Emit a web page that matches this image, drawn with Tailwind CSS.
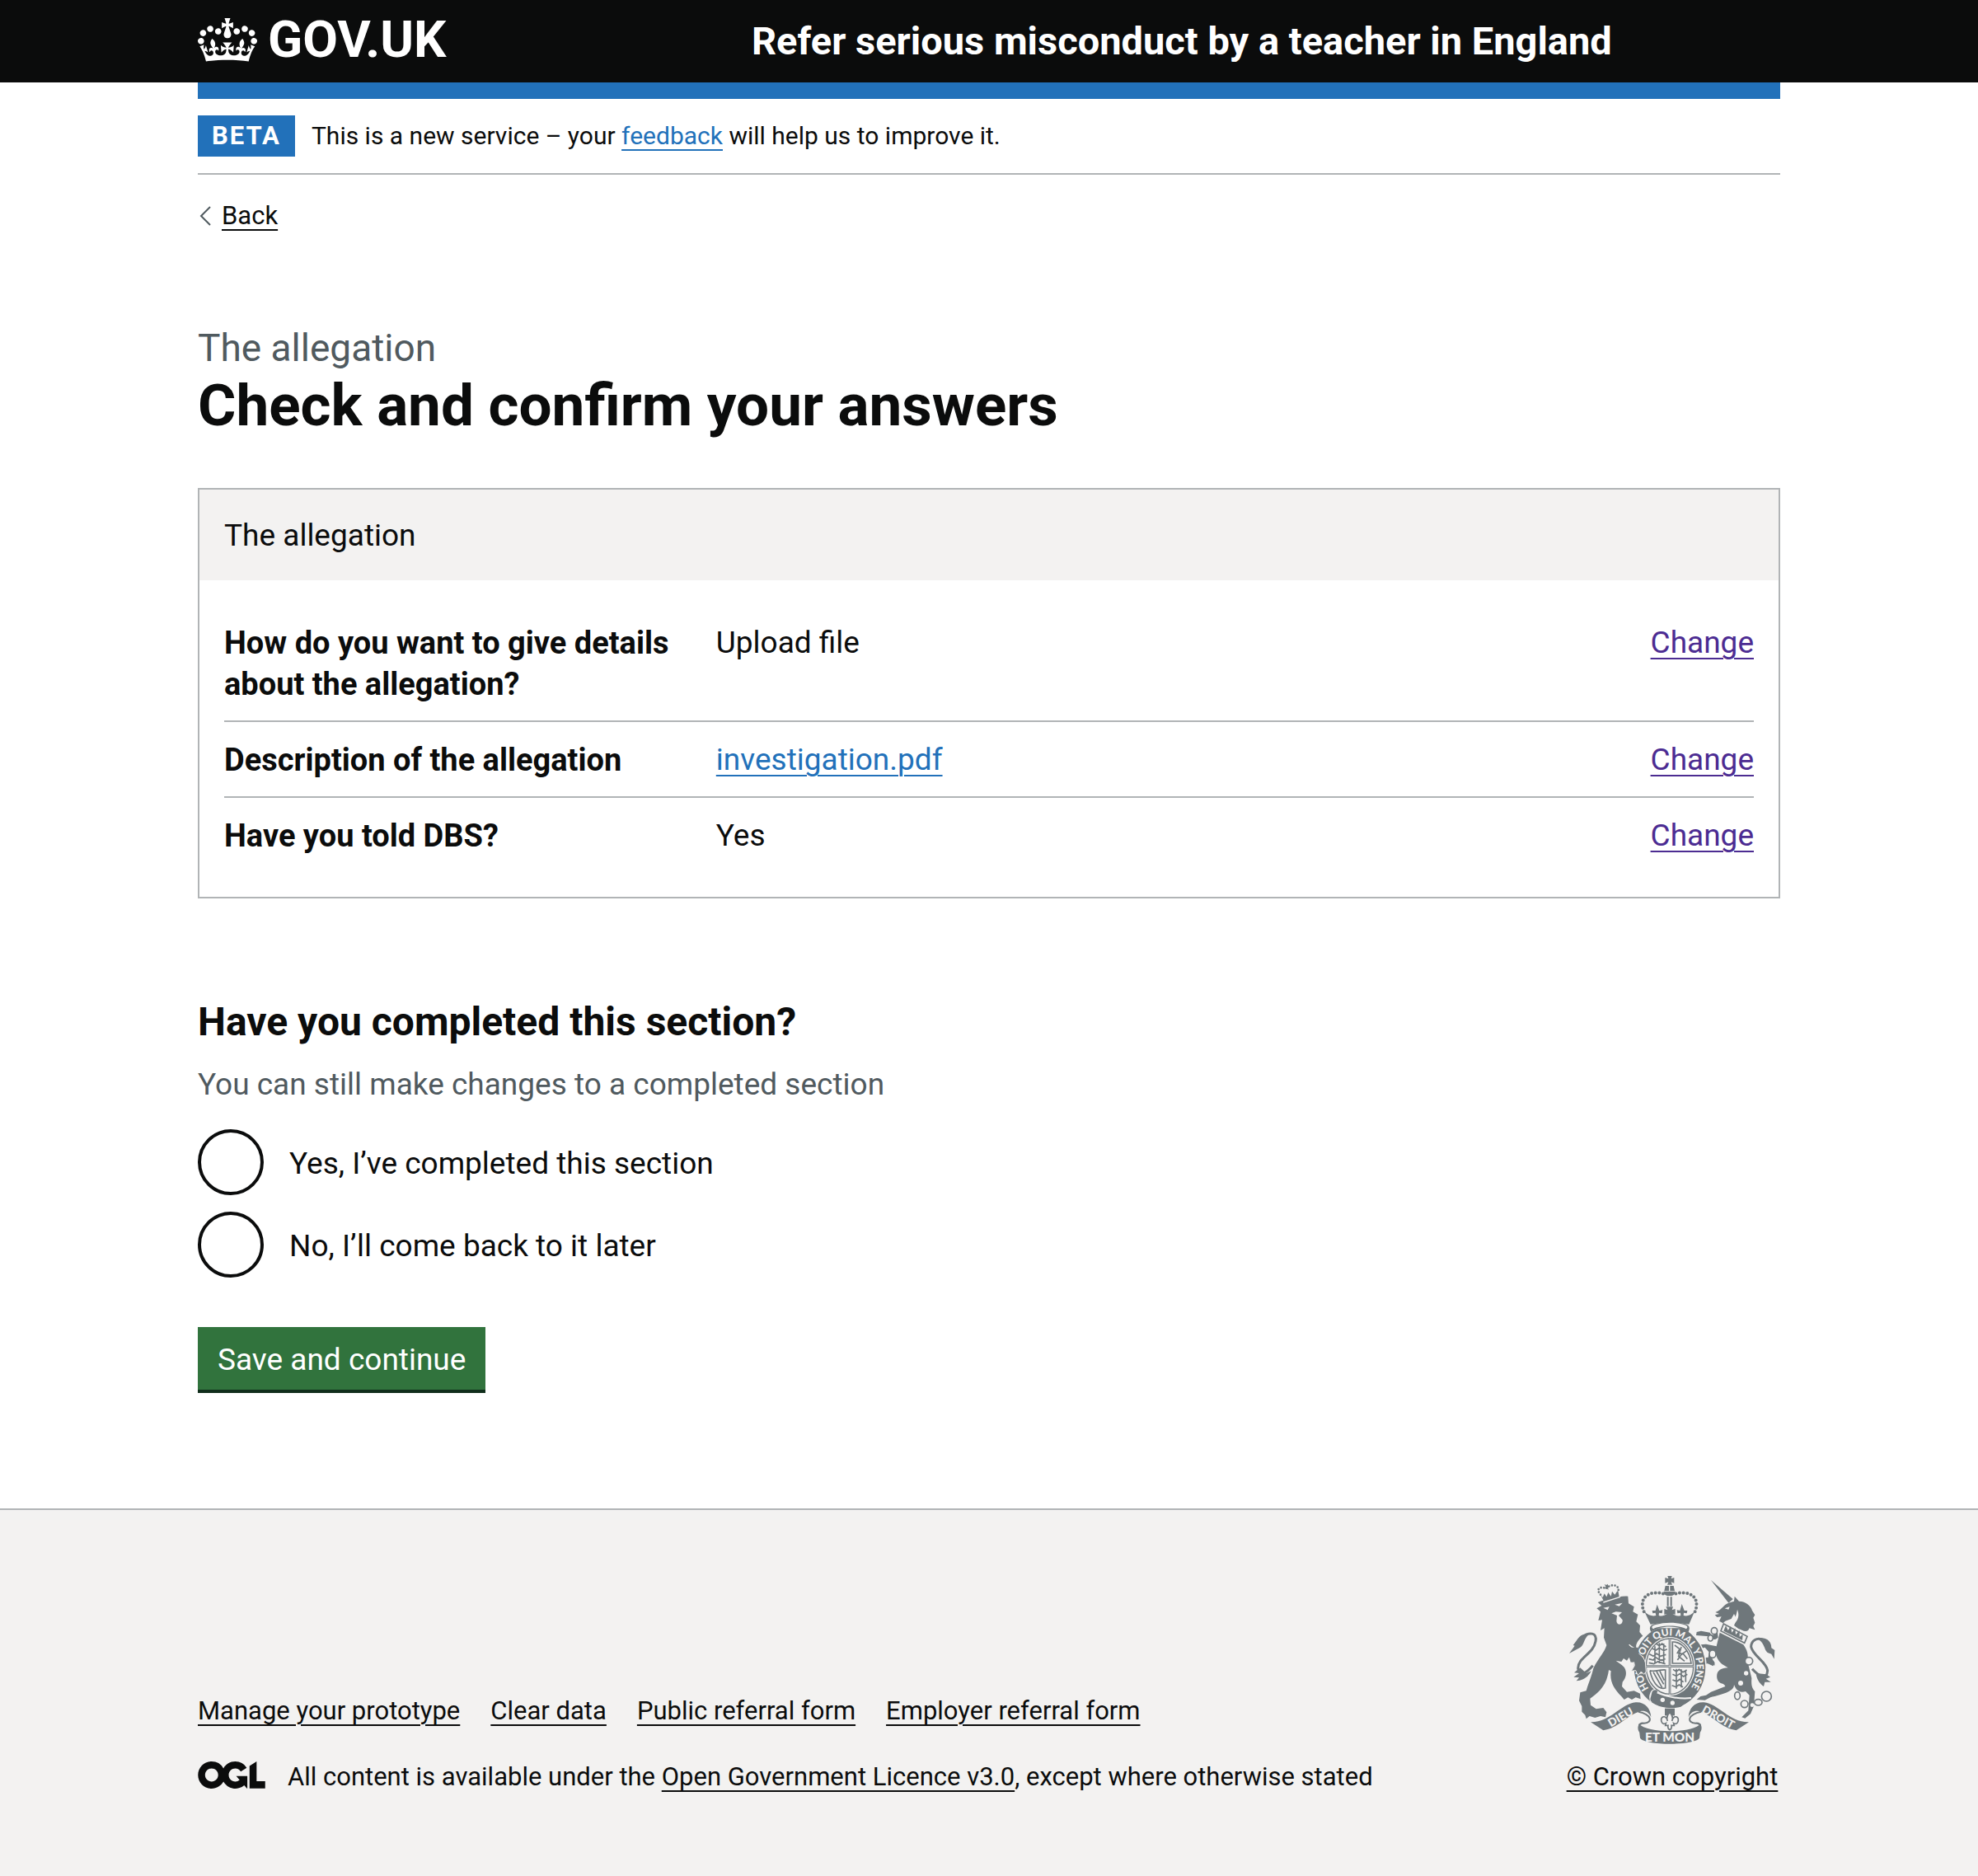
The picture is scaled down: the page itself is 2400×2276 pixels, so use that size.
<!DOCTYPE html>
<html lang="en">
<head>
<meta charset="utf-8">
<meta name="viewport" content="width=device-width, initial-scale=1">
<title>Check and confirm your answers</title>
<script src="https://cdn.jsdelivr.net/npm/@tailwindcss/browser@4"></script>
</head>
<body class="flex min-h-screen flex-col bg-[#f3f2f1] font-[Roboto,sans-serif] text-[37px] leading-[50px] text-[#0b0c0c]">

<header class="bg-[#0b0c0c] px-[60px] text-white">
  <div class="mx-auto flex h-[100px] max-w-[1920px] items-center">
    <div class="w-[35%] shrink-0">
      <a href="#" class="flex w-fit items-center gap-[13px] pb-1">
        <svg class="h-[53px] w-[72px]" viewBox="0 0 132 97" fill="currentColor" aria-hidden="true">
          <path d="M25 30.2c3.5 1.5 7.7-.2 9.1-3.7 1.5-3.6-.2-7.8-3.9-9.2-3.6-1.4-7.6.3-9.1 3.9-1.4 3.5.3 7.5 3.9 9zM9 39.5c3.6 1.5 7.8-.2 9.2-3.7 1.5-3.6-.2-7.8-3.9-9.1-3.6-1.5-7.6.2-9.1 3.8-1.4 3.5.3 7.5 3.8 9zM4.4 57.2c3.5 1.5 7.7-.2 9.1-3.8 1.5-3.6-.2-7.7-3.9-9.1-3.5-1.5-7.6.3-9.1 3.8-1.4 3.5.3 7.6 3.9 9.1zm38.3-21.4c3.5 1.5 7.7-.2 9.1-3.8 1.5-3.6-.2-7.7-3.9-9.1-3.6-1.5-7.6.3-9.1 3.8-1.3 3.6.4 7.7 3.9 9.1zm64.4-5.6c-3.6 1.5-7.8-.2-9.1-3.7-1.5-3.6.2-7.8 3.8-9.2 3.6-1.4 7.7.3 9.2 3.9 1.3 3.5-.4 7.5-3.9 9zm15.9 9.3c-3.6 1.5-7.7-.2-9.1-3.7-1.5-3.6.2-7.8 3.7-9.1 3.6-1.5 7.7.2 9.2 3.8 1.5 3.5-.3 7.5-3.8 9zm4.7 17.7c-3.6 1.5-7.8-.2-9.2-3.8-1.5-3.6.2-7.7 3.9-9.1 3.6-1.5 7.7.3 9.2 3.8 1.3 3.5-.4 7.6-3.9 9.1zM89.3 35.8c-3.6 1.5-7.8-.2-9.2-3.8-1.4-3.6.2-7.7 3.9-9.1 3.6-1.5 7.7.3 9.2 3.8 1.4 3.6-.3 7.7-3.9 9.1zM69.7 17.7l8.9 4.7V9.3l-8.9 2.8c-.2-.3-.5-.6-.9-.9L72.4 0H59.6l3.5 11.2c-.3.3-.6.5-.9.9l-8.8-2.8v13.1l8.8-4.7c.3.3.6.7.9.9l-5 15.4v.1c-.2.8-.4 1.6-.4 2.4 0 4.1 3.1 7.5 7 8.1h.2c.3 0 .7.1 1 .1.4 0 .7 0 1-.1h.2c4-.6 7.1-4.1 7.1-8.1 0-.8-.1-1.7-.4-2.4V34l-5.1-15.4c.4-.2.7-.6 1-.9zM66 92.8c16.9 0 32.8 1.1 47.1 3.2 4-16.9 8.9-26.7 14-33.5l-9.6-3.4c1 4.9 1.1 7.2 0 10.2-1.5-1.4-3-4.3-4.2-8.7L108.6 76c2.8-2 5-3.2 7.5-3.3-4.4 9.4-10 11.9-13.6 11.2-4.3-.8-6.3-4.6-5.6-7.9 1-4.7 5.7-5.9 8-.5 4.3-8.7-3-11.4-7.6-8.8 7.1-7.2 7.9-13.5 2.1-21.1-8 6.1-8.1 12.3-4.5 20.8-4.7-5.4-12.1-2.5-9.5 6.2 3.4-5.2 7.9-2 7.2 3.1-.6 4.3-6.4 7.8-13.5 7.2-10.3-.9-10.9-8-11.2-13.8 2.5-.5 7.1 1.8 11 7.3L80.2 60c-4.1 4.4-8 5.3-12.3 5.4 1.4-4.4 8-11.6 8-11.6H55.5s6.4 7.2 7.9 11.6c-4.2-.1-8-1-12.3-5.4l1.4 16.4c3.9-5.5 8.5-7.7 10.9-7.3-.3 5.8-.9 12.8-11.1 13.8-7.2.6-12.9-2.9-13.5-7.2-.7-5 3.8-8.3 7.1-3.1 2.7-8.7-4.6-11.6-9.4-6.2 3.7-8.5 3.6-14.7-4.6-20.8-5.8 7.6-5 13.9 2.2 21.1-4.7-2.6-11.9.1-7.7 8.8 2.3-5.5 7.1-4.2 8.1.5.7 3.3-1.3 7.1-5.7 7.9-3.5.7-9-1.8-13.5-11.2 2.5.1 4.7 1.3 7.5 3.3l-4.7-15.4c-1.2 4.4-2.7 7.2-4.3 8.7-1.1-3-.9-5.3 0-10.2l-9.5 3.4c5 6.9 9.9 16.7 14 33.5 14.8-2.1 30.8-3.2 47.7-3.2z"/>
        </svg>
        <span class="text-[62px] leading-[60px] font-bold">GOV.UK</span>
      </a>
    </div>
    <a href="#" class="text-[47px] leading-[60px] font-bold whitespace-nowrap">Refer serious misconduct by a teacher in England</a>
  </div>
</header>

<div class="grow bg-white px-[60px]">
  <div class="mx-auto max-w-[1920px] border-t-[20px] border-[#2271ba]">
    <div class="flex items-center gap-5 border-b-2 border-[#b1b4b6] py-5 text-[31px] leading-[50px]">
      <strong class="bg-[#2271ba] px-[17px] font-bold tracking-[2px] text-white">BETA</strong>
      <p class="text-[30px]">This is a new service – your <a href="#" class="text-[#2271ba] underline decoration-2 underline-offset-[6px]">feedback</a> will help us to improve it.</p>
    </div>

    <a href="#" class="mt-[30px] flex w-fit items-center gap-3 text-[31px] leading-[40px]">
      <svg class="h-[24px] w-[17px]" viewBox="0 0 17 24" fill="none" stroke="#505a5f" stroke-width="2" aria-hidden="true"><path d="M15 1L4 12l11 11"/></svg>
      <span class="underline decoration-2 underline-offset-[6px]">Back</span>
    </a>

    <main class="pt-[108px] pb-[140px]">
      <p class="text-[46px] leading-[64px] text-[#505a5f]">The allegation</p>
      <h1 class="text-[71px] leading-[76px] font-bold">Check and confirm your answers</h1>

      <section class="mt-[62px] border-2 border-[#b1b4b6]">
        <h2 class="bg-[#f3f2f1] px-[30px] pt-[31px] pb-[29px]">The allegation</h2>
        <dl class="divide-y-2 divide-[#b1b4b6] p-[30px]">
          <div class="grid grid-cols-[30%_1fr_auto] gap-x-10 pt-[21px] pb-[19px]">
            <dt class="text-[38px] font-bold">How do you want to give details about the allegation?</dt>
            <dd>Upload file</dd>
            <dd><a href="#" class="text-[#4c2c92] underline decoration-2 underline-offset-[6px]">Change</a></dd>
          </div>
          <div class="grid grid-cols-[30%_1fr_auto] gap-x-10 pt-[21px] pb-[19px]">
            <dt class="text-[38px] font-bold">Description of the allegation</dt>
            <dd><a href="#" class="text-[#2271ba] underline decoration-2 underline-offset-[6px]">investigation.pdf</a></dd>
            <dd><a href="#" class="text-[#4c2c92] underline decoration-2 underline-offset-[6px]">Change</a></dd>
          </div>
          <div class="grid grid-cols-[30%_1fr_auto] gap-x-10 pt-[21px] pb-[19px]">
            <dt class="text-[38px] font-bold">Have you told DBS?</dt>
            <dd>Yes</dd>
            <dd><a href="#" class="text-[#4c2c92] underline decoration-2 underline-offset-[6px]">Change</a></dd>
          </div>
        </dl>
      </section>

      <form class="mt-[120px]">
        <fieldset>
          <legend class="text-[48px] leading-[60px] font-bold">Have you completed this section?</legend>
          <p class="mt-[21px] text-[#505a5f]">You can still make changes to a completed section</p>
          <div class="mt-[29px] flex flex-col gap-5">
            <div class="flex items-center gap-[31px]">
              <input type="radio" id="completed-yes" name="completed" class="size-20 shrink-0 appearance-none rounded-full border-4 border-[#0b0c0c] bg-white">
              <label for="completed-yes" class="pt-[3px]">Yes, I’ve completed this section</label>
            </div>
            <div class="flex items-center gap-[31px]">
              <input type="radio" id="completed-no" name="completed" class="size-20 shrink-0 appearance-none rounded-full border-4 border-[#0b0c0c] bg-white">
              <label for="completed-no" class="pt-[3px]">No, I’ll come back to it later</label>
            </div>
          </div>
        </fieldset>
        <button type="submit" class="mt-[60px] block h-20 border-b-4 border-[#102e1b] bg-[#31733d] px-6 pt-[3px] text-white">Save and continue</button>
      </form>
    </main>
  </div>
</div>

<footer class="border-t-2 border-[#b1b4b6] bg-[#f3f2f1] px-[60px] pt-[80px] pb-[100px] text-[31px] leading-[40px]">
  <div class="mx-auto flex max-w-[1920px] items-end justify-between">
    <div>
      <ul class="flex gap-[37px]">
        <li><a href="#" class="underline decoration-2 underline-offset-[6px]">Manage your prototype</a></li>
        <li><a href="#" class="underline decoration-2 underline-offset-[6px]">Clear data</a></li>
        <li><a href="#" class="underline decoration-2 underline-offset-[6px]">Public referral form</a></li>
        <li><a href="#" class="underline decoration-2 underline-offset-[6px]">Employer referral form</a></li>
      </ul>
      <div class="mt-10 flex items-center gap-[27px]">
        <svg class="mb-[6px] h-[33px] w-[82px]" viewBox="0 0 483.2 195.7" fill="currentColor" aria-hidden="true"><path d="M421.5 142.8V.1l-50.7 32.3v161.1h112.4v-50.7zm-122.3-9.6A47.12 47.12 0 0 1 221 97.8c0-26 21.1-47.1 47.1-47.1 16.7 0 31.4 8.7 39.7 21.8l42.7-27.2A97.63 97.63 0 0 0 268.1 0c-36.5 0-68.3 20.1-85.1 49.7A98 98 0 0 0 97.8 0C43.9 0 0 43.9 0 97.9s43.9 97.8 97.8 97.8c36.5 0 68.3-20.1 85.1-49.7a97.76 97.76 0 0 0 149.6 25.4l19.4 22.2h3v-87.8h-80l24.3 27.5zM97.9 145c-26 0-47.1-21.1-47.1-47.1s21.1-47.1 47.1-47.1 47.1 21.1 47.1 47.1S123.9 145 97.8 145"/></svg>
        <p>All content is available under the <a href="#" class="underline decoration-2 underline-offset-[6px]">Open Government Licence v3.0</a>, except where otherwise stated</p>
      </div>
    </div>
    <a href="#" class="flex w-[262px] flex-col items-center gap-5">
      <svg class="h-[204px] w-[250px]" viewBox="72 66 750 612" fill="#6f777b" aria-hidden="true">
        <!-- lion -->
        <path d="M176 162L190 174 172 184 186 196 178 228 192 226 186 264 200 256 198 290 208 318 C200 345 178 365 160 402 C154 430 142 455 134 484 L112 490 108 520 118 540 118 560 130 572 134 586 146 576 166 582 186 576 204 580 208 562 196 546 170 550 150 536 148 512 C175 492 208 470 216 408 L224 412 C218 450 236 478 262 504 L272 516 286 508 300 516 314 508 332 514 330 494 308 484 282 488 264 468 266 452 C284 430 280 410 272 398 C262 386 250 382 242 374 L262 378 270 366 282 374 290 362 300 376 312 390 300 410 316 406 320 424 334 412 346 420 348 384 C344 356 326 338 310 334 L288 316 316 330 C312 312 326 296 340 284 L328 270 330 246 316 232 322 206 304 196 308 178 288 166 286 140 C250 138 210 150 176 162Z"/>
        <path d="M186 134l8 10 6-14 8 12 6-16 10 14 4-18 10 12 8-12 4-2 4 22-54 20z"/>
        <path d="M186 134C166 112 188 102 206 112M208 110C222 94 258 96 250 124" fill="none" stroke="#6f777b" stroke-width="8" stroke-dasharray="0 11" stroke-linecap="round"/>
        <path d="M200 96l7 3 5-4 2 8 7 1-7 4 0 9-5-7-8 2 4-8z"/>
        <path d="M196 182l22-4-6 12zM238 170l28-6-12 12z" fill="#f3f2f1"/>
        <path d="M226 202l16-6 22 2-12 12 14 16c2 20-20 22-22 4l2-20z" fill="#f3f2f1"/>
        <path d="M196 162L258 142M290 316l28 24" fill="none" stroke="#f3f2f1" stroke-width="4"/>
        <path d="M118 288C146 268 174 272 168 304C160 350 104 362 104 402C108 434 134 420 158 392" fill="none" stroke="#6f777b" stroke-width="9"/>
        <path d="M142 280C108 274 108 292 86 318L92 320 72 348 112 326C126 318 124 298 142 280zM112 400L90 418 108 420 88 434 108 436 98 448C120 446 140 436 152 412L134 420z"/>

        <!-- unicorn -->
        <path d="M588 81L668 150 652 164Z"/>
        <path d="M604 198C624 192 634 170 652 164L672 158 674 140 690 158C716 158 734 176 738 192L748 208 742 218 748 236 742 248 748 262 728 256C720 278 700 262 688 258L672 246 682 224 672 204 662 222 640 230 632 238 618 230 626 214 610 216 602 208 618 204Z"/>
        <path d="M638 184l18-6-4 10zM684 188c12 28-4 50-20 54 8-16 16-30 20-54z" fill="#f3f2f1"/>
        <path d="M634 240L720 286 710 310 624 266Z" fill="none" stroke="#6f777b" stroke-width="5"/>
        <path d="M634 266l8-20 8 18 10-16 4 24 12-16 2 24 14-16 0 24 12-10-2 22z"/>
        <path d="M620 272L706 316C726 344 722 360 722 380L736 438C734 466 738 474 748 486L744 540 732 568 712 584 700 580 724 556 728 500 714 486 C690 494 680 480 672 462 C672 488 628 496 586 508 L566 518 536 516 550 504 570 500 588 488 640 468 C636 452 616 464 610 438 C606 410 624 402 650 400 C628 388 614 380 606 352 L598 340 C590 352 588 366 600 378 L602 392 586 380 570 386 564 370 578 362 582 344 566 326 554 330 550 350 538 344 536 324 552 316 570 314 608 322 Z"/>
        <path d="M614 290C596 306 590 290 580 286L562 284 534 282 536 270 552 266 584 272C594 290 604 276 612 270zM560 366L574 362 602 382 596 394 566 380z"/>
        <g fill="#f3f2f1" stroke="#6f777b" stroke-width="5"><ellipse cx="600" cy="266" rx="11" ry="12"/><ellipse cx="586" cy="292" rx="9" ry="11"/><ellipse cx="594" cy="350" rx="12" ry="14"/><circle cx="726" cy="376" r="14"/><ellipse cx="684" cy="502" rx="10" ry="14"/><circle cx="710" cy="532" r="13"/><ellipse cx="760" cy="526" rx="14" ry="11"/><circle cx="790" cy="504" r="18"/></g>
        <g fill="#f3f2f1"><circle cx="716" cy="420" r="8"/><circle cx="696" cy="456" r="9"/><circle cx="738" cy="536" r="7"/></g>
        <path d="M782 300C752 286 734 304 734 324C740 356 790 378 794 410C792 446 764 432 738 404" fill="none" stroke="#6f777b" stroke-width="9"/>
        <path d="M756 294C790 286 808 304 808 328L820 336 818 368 808 350 796 346C780 336 786 310 756 294zM752 420L790 424 804 434 788 440 806 452 784 452 780 468C768 460 754 444 752 420z"/>

        <!-- garter and shield -->
        <ellipse cx="438" cy="397" rx="132" ry="151" stroke="#f3f2f1" stroke-width="4"/>
        <ellipse cx="438" cy="395" rx="92" ry="107" fill="#f3f2f1"/>
        <ellipse cx="438" cy="395" rx="86" ry="101" fill="none" stroke="#6f777b" stroke-width="4"/>
        <path d="M438 292V498M352 395H524" fill="none" stroke="#6f777b" stroke-width="8"/>
        <path d="M438 292V498M352 395H524" fill="none" stroke="#f3f2f1" stroke-width="2"/>
        <g fill="none" stroke="#6f777b" stroke-width="5"><path d="M388 312l12 8 10-8 14 12M374 330l14 6 12-8 16 10 12-6M364 350l14 8 12-10 14 10 20-6M362 368l16 4 8-10 16 10 20-4M362 382l18 4 14-8 28 8M400 310v74M416 312v70M384 322v60"/>
        <path d="M450 406l12 8 10-8 14 10 14-8M448 424l14 6 12-8 14 10 14-8M448 444l16 6 10-8 14 10M446 464l14 6 12-8 14 8M462 404v72M480 406v66M496 408v44"/>
        <path d="M448 306C480 304 510 336 516 384H448ZM456 318l18 14-8 14 22 4 14 18M466 372l14-20 20-14M480 324l-10 34 22 18"/>
        <path d="M366 410C384 416 402 406 422 408V474C394 482 372 446 366 410M378 416l32 56M390 414l26 46M402 412l16 34"/></g>
        <path id="garter-line" d="M362 476A99 117 0 1 1 502 488" fill="none"/>
        <text fill="#f3f2f1" font-family="Lato, sans-serif" font-weight="900" font-size="36"><textPath href="#garter-line">HONI SOIT QUI MAL Y PENSE</textPath></text>
        <path d="M384 480C366 484 362 512 372 526M392 490C430 508 480 514 516 510" fill="none" stroke="#f3f2f1" stroke-width="6"/>
        <path d="M392 484C374 478 370 496 382 500C364 506 366 526 382 524L392 514C430 526 470 532 508 518L478 540C440 550 410 540 380 526" stroke="#6f777b" stroke-width="4"/>
        <circle cx="412" cy="517" r="8" fill="#f3f2f1"/><circle cx="448" cy="528" r="8" fill="#f3f2f1"/>
        <path d="M300 340C330 344 350 366 350 390L352 414 344 424 334 414 322 428 314 410 298 412 310 392Z" stroke="#f3f2f1" stroke-width="3"/>
        <path d="M280 326H322L326 352 314 378 296 380Z"/>

        <!-- crown -->
        <path d="M352 256L376 228H500L524 256Z" fill="#f3f2f1"/>
        <path d="M430 66h16l-3 10 11-4v20l-11-4 4 10h-18l4-10-12 4V72l12 4zM422 102h30l4 18h-38zM416 122h42c0 14-12 16-21 16s-21-2-21-16z"/>
        <path d="M437 100v20" stroke="#f3f2f1" stroke-width="4"/>
        <path d="M428 142h6v34h-6zM440 142h6v34h-6z"/>
        <path d="M346 196C360 210 376 214 388 210L386 200 376 202 374 192 386 192 392 170 400 192 412 190 410 202 399 200 398 210C410 214 418 210 428 204L418 206V186L430 190 424 178H450L446 190 458 186V206L448 204C458 210 466 214 478 210L477 200 466 202 464 190 475 192 482 168 491 192 502 192 500 202 489 200 488 210C500 214 514 210 528 196L508 242C464 234 412 234 368 242Z"/>
        <path d="M384 240C424 230 456 230 492 240C512 246 512 256 506 270C470 244 404 244 370 270C362 256 364 246 384 240Z"/>
        <path d="M384 244C424 234 456 234 492 244C504 248 504 254 498 259C470 244 404 244 378 259C370 254 372 248 384 244Z" fill="#f3f2f1"/>
        <path d="M344 196C322 140 370 116 418 132M530 196C552 140 504 116 456 132" fill="none" stroke="#6f777b" stroke-width="12" stroke-linecap="round" stroke-dasharray="0 14"/>

        <!-- ribbon and fleur-de-lis -->
        <path d="M420 548h36v26h-36z"/>
        <path d="M438 562C450 574 450 584 446 594C452 570 474 576 468 596C466 604 458 606 452 602L454 610H444C446 618 442 624 438 626C434 624 430 618 432 610H422L424 602C418 606 410 604 408 596C402 576 424 570 430 594C426 584 426 574 438 562Z" fill="#f3f2f1" stroke="#6f777b" stroke-width="5"/>
        <path d="M150 598C220 600 262 530 314 526C348 524 368 548 370 580C360 556 338 552 322 562C280 576 250 620 196 628Z"/>
        <path d="M726 598C656 600 614 530 562 526C528 524 508 548 506 580C516 556 538 552 554 562C596 576 626 620 680 628Z"/>
        <path d="M324 560C372 570 378 600 344 602C320 600 322 628 334 636M552 560C504 570 498 600 532 602C556 600 554 628 542 636" fill="none" stroke="#6f777b" stroke-width="6"/>
        <path d="M324 604C360 640 516 640 552 604L546 656C526 684 350 684 330 656Z"/>
        <g fill="#f3f2f1" font-family="Lato, sans-serif" font-weight="900" text-anchor="middle">
          <text x="438" y="668" font-size="46">ET MON</text>
          <text transform="translate(266 592) rotate(-30)" font-size="41">DIEU</text>
          <text transform="translate(608 592) rotate(29)" font-size="41">DROIT</text>
        </g>
      </svg>
      <span class="whitespace-nowrap underline decoration-2 underline-offset-[6px]">© Crown copyright</span>
    </a>
  </div>
</footer>
</body>
</html>
